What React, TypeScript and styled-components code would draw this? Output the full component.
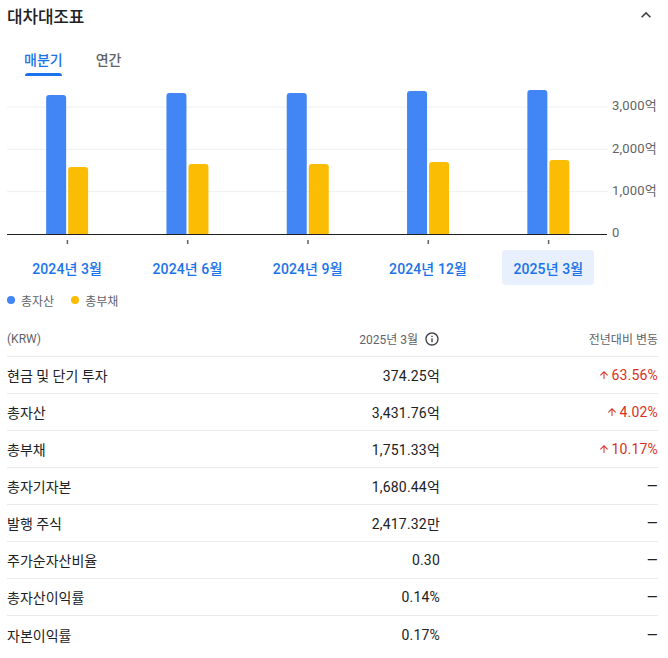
import React from "react";
import styled, { createGlobalStyle } from "styled-components";

const FONT = `Roboto, "Noto Sans CJK KR", "Noto Sans", sans-serif`;

const Global = createGlobalStyle`
  html, body { margin: 0; padding: 0; background: #fff; }
  body { font-family: ${FONT}; color: #202124; }
  * { box-sizing: border-box; }
`;

const Page = styled.div`
  width: 668px;
  display: flex;
  flex-direction: column;
`;

const Header = styled.div`
  height: 30px;
  padding: 0 12px 0 7px;
  display: flex;
  align-items: center;
  justify-content: space-between;
`;

const Title = styled.h2`
  margin: 0;
  font-size: 17px;
  font-weight: 500;
  color: #202124;
  letter-spacing: -0.2px;
`;

const IconButton = styled.button`
  border: 0;
  background: none;
  padding: 0;
  width: 20px;
  height: 20px;
  display: flex;
  align-items: center;
  justify-content: center;
  color: #3c4043;
`;

const Tabs = styled.div`
  display: flex;
  height: 46px;
  padding: 10px 0 0 24px;
  gap: 33px;
`;

const Tab = styled.div<{ $active?: boolean }>`
  position: relative;
  padding: 10px 0 6px;
  line-height: 20px;
  font-size: 14px;
  font-weight: 500;
  color: ${(p) => (p.$active ? "#1a73e8" : "#5f6368")};
  &::after {
    content: "";
    display: ${(p) => (p.$active ? "block" : "none")};
    position: absolute;
    left: 1px;
    right: 1px;
    bottom: 0;
    height: 3px;
    border-radius: 3px 3px 0 0;
    background: #1a73e8;
  }
`;

const ChartSvg = styled.svg`
  display: block;
  width: 668px;
  height: 170px;
`;

const XLabels = styled.div`
  display: grid;
  grid-template-columns: repeat(5, 120.3px);
  padding-left: 7px;
  margin-top: 4px;
  height: 35px;
`;

const XLabelCell = styled.div`
  display: flex;
  justify-content: center;
`;

const XLabel = styled.button<{ $selected?: boolean }>`
  border: 0;
  border-radius: 4px;
  height: 35px;
  padding: 0 11px;
  font-family: ${FONT};
  font-size: 14px;
  font-weight: 500;
  letter-spacing: 0.1px;
  color: #1a73e8;
  background: ${(p) => (p.$selected ? "#e8f0fe" : "transparent")};
  white-space: nowrap;
`;

const Legend = styled.div`
  display: flex;
  align-items: center;
  gap: 17px;
  padding-left: 7px;
  margin-top: 7px;
  height: 16px;
`;

const LegendItem = styled.div`
  display: flex;
  align-items: center;
  gap: 6px;
  font-size: 12px;
  color: #5f6368;
`;

const Dot = styled.span<{ $color: string }>`
  width: 8px;
  height: 8px;
  border-radius: 50%;
  background: ${(p) => p.$color};
`;

const Table = styled.div`
  margin: 12px 10px 0 7px;
  display: flex;
  flex-direction: column;
`;

const Row = styled.div`
  display: grid;
  grid-template-columns: 1fr 200px 218px;
  align-items: center;
  height: 37px;
  border-bottom: 1px solid #e8eaed;
  &:last-child { border-bottom: 0; }
`;

const HeadCell = styled.div<{ $align?: string }>`
  font-size: 12px;
  color: #5f6368;
  display: flex;
  align-items: center;
  justify-content: ${(p) => p.$align || "flex-start"};
  gap: 6px;
  padding-top: 1px;
`;

const Label = styled.div`
  font-size: 14px;
  color: #202124;
`;

const Value = styled.div`
  font-size: 14px;
  font-weight: 400;
  letter-spacing: 0.2px;
  color: #202124;
  text-align: right;
`;

const Change = styled.div<{ $up?: boolean }>`
  font-size: 14px;
  font-weight: 400;
  letter-spacing: 0.2px;
  color: ${(p) => (p.$up ? "#d93025" : "#202124")};
  display: flex;
  align-items: center;
  justify-content: flex-end;
  gap: 1px;
`;

const quarters = [
  { label: "2024년 3월", assets: 139, debt: 67 },
  { label: "2024년 6월", assets: 141, debt: 70 },
  { label: "2024년 9월", assets: 141, debt: 70 },
  { label: "2024년 12월", assets: 143, debt: 72 },
  { label: "2025년 3월", assets: 144, debt: 74, selected: true },
];

const rows = [
  { label: "현금 및 단기 투자", value: "374.25억", change: "63.56%" },
  { label: "총자산", value: "3,431.76억", change: "4.02%" },
  { label: "총부채", value: "1,751.33억", change: "10.17%" },
  { label: "총자기자본", value: "1,680.44억" },
  { label: "발행 주식", value: "2,417.32만" },
  { label: "주가순자산비율", value: "0.30" },
  { label: "총자산이익률", value: "0.14%" },
  { label: "자본이익률", value: "0.17%" },
];

const BASE = 158;
const STEP = 42.33;
const X0 = 7;
const COL = 120.3;

function barPath(x: number, w: number, h: number) {
  const r = 3;
  const top = BASE - h;
  return `M${x} ${BASE} V${top + r} Q${x} ${top} ${x + r} ${top} H${x + w - r} Q${x + w} ${top} ${x + w} ${top + r} V${BASE} Z`;
}

function Chart() {
  const ticks = ["0", "1,000억", "2,000억", "3,000억"];
  return (
    <ChartSvg viewBox="0 0 668 170">
      {ticks.map((t, i) => {
        const y = BASE - i * STEP;
        return (
          <g key={t}>
            {i > 0 && <line x1={X0} x2={608} y1={y} y2={y} stroke="#eef0f2" strokeWidth={1} />}
            <text x={612} y={y} dominantBaseline="middle" fontSize={13} letterSpacing={0.2} fill="#5f6368" fontFamily={FONT}>
              {t}
            </text>
          </g>
        );
      })}
      {quarters.map((q, i) => {
        const c = X0 + COL * i + COL / 2;
        return (
          <g key={q.label}>
            <path d={barPath(c - 21, 20, q.assets)} fill="#4285f4" />
            <path d={barPath(c + 1, 20, q.debt)} fill="#fbbc04" />
            <rect x={c - 0.5} y={BASE + 6} width={1.5} height={4} fill="#5f6368" />
          </g>
        );
      })}
      <line x1={X0} x2={607} y1={BASE + 0.5} y2={BASE + 0.5} stroke="#202124" strokeWidth={1.2} />
    </ChartSvg>
  );
}

const ChevronUp = () => (
  <svg width="20" height="20" viewBox="0 0 24 24" fill="currentColor">
    <path d="M12 8l-6 6 1.41 1.41L12 10.83l4.59 4.58L18 14z" />
  </svg>
);

const InfoIcon = () => (
  <svg width="16" height="16" viewBox="0 0 24 24" fill="#3c4043">
    <path d="M11 7h2v2h-2zm0 4h2v6h-2zm1-9C6.48 2 2 6.48 2 12s4.48 10 10 10 10-4.48 10-10S17.52 2 12 2zm0 18c-4.41 0-8-3.59-8-8s3.59-8 8-8 8 3.59 8 8-3.59 8-8 8z" />
  </svg>
);

const ArrowUp = () => (
  <svg width="12" height="12" viewBox="0 0 24 24" fill="currentColor">
    <path d="M4 12l1.41 1.41L11 7.83V20h2V7.83l5.58 5.59L20 12l-8-8-8 8z" />
  </svg>
);

export default function App() {
  return (
    <Page>
      <Global />
      <Header>
        <Title>대차대조표</Title>
        <IconButton aria-label="접기">
          <ChevronUp />
        </IconButton>
      </Header>
      <Tabs>
        <Tab $active>매분기</Tab>
        <Tab>연간</Tab>
      </Tabs>
      <Chart />
      <XLabels>
        {quarters.map((q) => (
          <XLabelCell key={q.label}>
            <XLabel $selected={q.selected}>{q.label}</XLabel>
          </XLabelCell>
        ))}
      </XLabels>
      <Legend>
        <LegendItem>
          <Dot $color="#4285f4" />
          총자산
        </LegendItem>
        <LegendItem>
          <Dot $color="#fbbc04" />
          총부채
        </LegendItem>
      </Legend>
      <Table>
        <Row>
          <HeadCell>(KRW)</HeadCell>
          <HeadCell $align="flex-end">
            2025년 3월
            <InfoIcon />
          </HeadCell>
          <HeadCell $align="flex-end">전년대비 변동</HeadCell>
        </Row>
        {rows.map((r) => (
          <Row key={r.label}>
            <Label>{r.label}</Label>
            <Value>{r.value}</Value>
            {r.change ? (
              <Change $up>
                <ArrowUp />
                {r.change}
              </Change>
            ) : (
              <Change>—</Change>
            )}
          </Row>
        ))}
      </Table>
    </Page>
  );
}
